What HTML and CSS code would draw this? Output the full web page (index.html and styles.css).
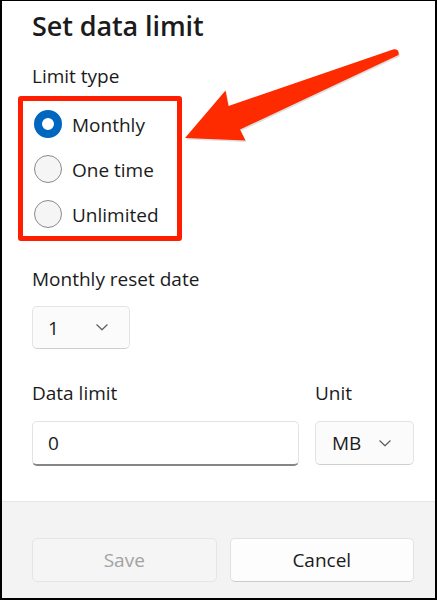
FILE: index.html
```html
<!DOCTYPE html>
<html lang="en">
<head>
<meta charset="utf-8">
<title>Set data limit</title>
<link rel="stylesheet" href="styles.css">
</head>
<body>
<div class="dialog">
  <div class="content">
    <h1 class="title">Set data limit</h1>
    <div class="label">Limit type</div>
    <div class="radio-group">
      <div class="radio-row"><span class="radio checked"></span><span class="radio-text">Monthly</span></div>
      <div class="radio-row"><span class="radio"></span><span class="radio-text">One time</span></div>
      <div class="radio-row"><span class="radio"></span><span class="radio-text">Unlimited</span></div>
    </div>
    <div class="label label-reset">Monthly reset date</div>
    <div class="select select-day">
      <span class="select-value">1</span>
      <svg class="chevron" width="12" height="7" viewBox="0 0 12 7"><polyline points="0.8,0.8 6,5.8 11.2,0.8" fill="none" stroke="#5f5f5f" stroke-width="1.2" stroke-linecap="round" stroke-linejoin="round"/></svg>
    </div>
    <div class="limit-row">
      <div class="field field-limit">
        <div class="label">Data limit</div>
        <div class="input"><span>0</span></div>
      </div>
      <div class="field field-unit">
        <div class="label">Unit</div>
        <div class="select select-unit">
          <span class="select-value">MB</span>
          <svg class="chevron" width="12" height="7" viewBox="0 0 12 7"><polyline points="0.8,0.8 6,5.8 11.2,0.8" fill="none" stroke="#5f5f5f" stroke-width="1.2" stroke-linecap="round" stroke-linejoin="round"/></svg>
        </div>
      </div>
    </div>
  </div>
  <div class="footer">
    <button class="btn btn-disabled" disabled>Save</button>
    <button class="btn">Cancel</button>
  </div>
  <svg class="arrow" width="437" height="600" viewBox="0 0 437 600">
    <path d="M186,139.5 L226.5,92 L229.5,107.5 L394,51 Q400.5,50 399.5,56.5 L241,131 L246.5,142 Z" fill="#b8b8b8" opacity="0.45"/>
    <path d="M185,138 L225.5,90.5 L228.5,106 L393,49.5 Q399.5,48.5 398.5,55 L240,129.5 L245.5,140.5 Z" fill="#fe2a00"/>
  </svg>
</div>
</body>
</html>
```

FILE: styles.css
```css
* { box-sizing: border-box; }
html, body { margin: 0; padding: 0; background: #ffffff; }
body {
  font-family: "Open Sans", "Noto Sans", "Liberation Sans", sans-serif;
  color: #1b1b1b;
}
.dialog {
  position: relative;
  width: 437px;
  height: 600px;
  border-style: solid;
  border-color: #000000;
  border-width: 1px 2px 2px 2px;
  display: flex;
  flex-direction: column;
  background: #ffffff;
  overflow: hidden;
}
.content {
  height: 500px;
  padding: 0 21px 0 30px;
}
.title {
  margin: 8px 0 0 0;
  font-size: 27px;
  line-height: 34px;
  font-weight: 600;
  letter-spacing: -0.1px;
}
.label {
  font-size: 19px;
  line-height: 26px;
  margin-top: 20px;
}
.radio-group {
  margin: 7px 0 0 -14px;
  width: 164px;
  border: 5px solid #ff1e00;
  border-radius: 3px;
  padding: 0 0 0 11px;
}
.radio-row {
  height: 45px;
  display: flex;
  align-items: center;
  gap: 10px;
}
.radio {
  width: 28px;
  height: 28px;
  border-radius: 50%;
  border: 1.5px solid #8a8a8a;
  background: #f5f5f5;
  flex: none;
}
.radio.checked {
  border: 8.5px solid #0067c0;
  background: #ffffff;
}
.radio-text {
  font-size: 19px;
  line-height: 26px;
  padding-top: 2px;
}
.label-reset { margin-top: 25px; }
.select {
  display: flex;
  align-items: center;
  justify-content: space-between;
  height: 43px;
  border: 1px solid #e3e3e3;
  border-bottom-color: #cfcfcf;
  border-radius: 5px;
  background: #fbfbfb;
  font-size: 19px;
}
.select-day {
  width: 98px;
  margin-top: 14px;
  padding: 0 21px 0 15px;
}
.select-value { line-height: 26px; }
.chevron { display: block; }
.limit-row {
  display: flex;
  gap: 16px;
  margin-top: 11px;
}
.field-limit { width: 267px; }
.field-unit { width: 99px; }
.limit-row .label { margin-top: 20px; }
.input {
  margin-top: 15px;
  height: 45px;
  border: 1px solid #e3e3e3;
  border-bottom: 2px solid #868686;
  border-radius: 5px;
  background: #ffffff;
  display: flex;
  align-items: center;
  padding: 0 15px;
  font-size: 19px;
  line-height: 26px;
}
.select-unit {
  margin-top: 15px;
  height: 44px;
  padding: 0 22px 0 16px;
}
.footer {
  flex: 1;
  background: #f3f3f3;
  border-top: 1px solid #e5e5e5;
  padding: 36px 21px 0 30px;
  display: grid;
  grid-template-columns: 1fr 1fr;
  column-gap: 13px;
  align-content: start;
}
.btn {
  height: 44px;
  border: 1px solid #e2e2e2;
  border-bottom-color: #cccccc;
  border-radius: 5px;
  background: #fdfdfd;
  font-family: "Open Sans", "Noto Sans", "Liberation Sans", sans-serif;
  font-size: 19px;
  color: #1b1b1b;
  padding: 0;
}
.btn-disabled {
  background: #f5f5f5;
  border-color: #e5e5e5;
  color: #a3a3a3;
}
.arrow {
  position: absolute;
  left: -2px;
  top: -1px;
  pointer-events: none;
}
```
